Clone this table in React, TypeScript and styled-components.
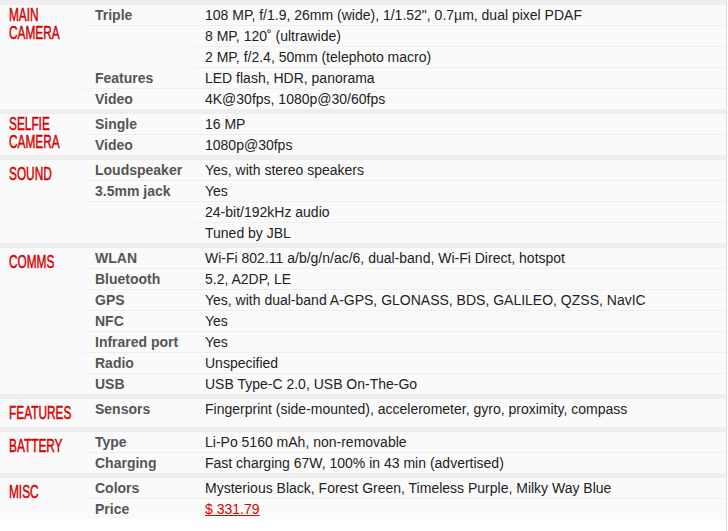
import React from "react";
import styled, { createGlobalStyle } from "styled-components";

const GlobalStyle = createGlobalStyle`
  html, body { margin: 0; padding: 0; background: #ffffff; }
  body { font-family: "Liberation Sans", Arial, sans-serif; }
`;

type Row = { label: string; value: string; price?: boolean };
type Section = { title: string[]; rows: Row[] };

const data: Section[] = [
  {
    title: ["MAIN", "CAMERA"],
    rows: [
      { label: "Triple", value: "108 MP, f/1.9, 26mm (wide), 1/1.52\", 0.7µm, dual pixel PDAF" },
      { label: "", value: "8 MP, 120˚ (ultrawide)" },
      { label: "", value: "2 MP, f/2.4, 50mm (telephoto macro)" },
      { label: "Features", value: "LED flash, HDR, panorama" },
      { label: "Video", value: "4K@30fps, 1080p@30/60fps" },
    ],
  },
  {
    title: ["SELFIE", "CAMERA"],
    rows: [
      { label: "Single", value: "16 MP" },
      { label: "Video", value: "1080p@30fps" },
    ],
  },
  {
    title: ["SOUND"],
    rows: [
      { label: "Loudspeaker", value: "Yes, with stereo speakers" },
      { label: "3.5mm jack", value: "Yes" },
      { label: "", value: "24-bit/192kHz audio" },
      { label: "", value: "Tuned by JBL" },
    ],
  },
  {
    title: ["COMMS"],
    rows: [
      { label: "WLAN", value: "Wi-Fi 802.11 a/b/g/n/ac/6, dual-band, Wi-Fi Direct, hotspot" },
      { label: "Bluetooth", value: "5.2, A2DP, LE" },
      { label: "GPS", value: "Yes, with dual-band A-GPS, GLONASS, BDS, GALILEO, QZSS, NavIC" },
      { label: "NFC", value: "Yes" },
      { label: "Infrared port", value: "Yes" },
      { label: "Radio", value: "Unspecified" },
      { label: "USB", value: "USB Type-C 2.0, USB On-The-Go" },
    ],
  },
  {
    title: ["FEATURES"],
    rows: [
      { label: "Sensors", value: "Fingerprint (side-mounted), accelerometer, gyro, proximity, compass" },
    ],
  },
  {
    title: ["BATTERY"],
    rows: [
      { label: "Type", value: "Li-Po 5160 mAh, non-removable" },
      { label: "Charging", value: "Fast charging 67W, 100% in 43 min (advertised)" },
    ],
  },
  {
    title: ["MISC"],
    rows: [
      { label: "Colors", value: "Mysterious Black, Forest Green, Timeless Purple, Milky Way Blue" },
      { label: "Price", value: "$ 331.79", price: true },
    ],
  },
];

const Page = styled.div`
  width: 726px;
  min-height: 531px;
  border-right: 1px solid #dcdcdc;
  background: #ffffff;
`;

const SpecList = styled.div`
  display: flex;
  flex-direction: column;
  gap: 5px;
  padding-top: 5px;
  background: #eeeeee;
`;

const SectionBox = styled.section`
  display: flex;
  align-items: flex-start;
  background: #fafafa;
`;

const Category = styled.div<{ $twoLine: boolean }>`
  flex: none;
  width: 84px;
  box-sizing: border-box;
  padding: ${(p) => (p.$twoLine ? "1px 0 3px 9px" : "5px 0 5px 9px")};
  font-family: "Liberation Sans", Arial, sans-serif;
  font-size: 16px;
  line-height: 18px;
  color: #d50000;
  -webkit-text-stroke: 0.45px #d50000;
`;

const CategoryLine = styled.span`
  display: block;
  width: 120px;
  height: 18px;
  transform: scale(0.74, 1.12);
  transform-origin: left center;
  white-space: nowrap;
`;

const Rows = styled.div`
  flex: 1;
  display: flex;
  flex-direction: column;
`;

const RowBox = styled.div`
  display: flex;
  font-size: 14px;
  line-height: 16px;
`;

const Label = styled.div<{ $border: boolean; $last: boolean }>`
  flex: none;
  width: 111px;
  box-sizing: border-box;
  padding: 2px 0 2px 11px;
  font-weight: bold;
  color: #555555;
  border-bottom: ${(p) =>
    p.$last ? "none" : `1px solid ${p.$border ? "#efefef" : "transparent"}`};
`;

const Value = styled.div<{ $last: boolean }>`
  flex: 1;
  padding: 2px 10px;
  color: #222222;
  border-bottom: ${(p) => (p.$last ? "none" : "1px solid #efefef")};
`;

const PriceLink = styled.a`
  color: #d50000;
  text-decoration: underline;
`;

export default function App() {
  return (
    <>
      <GlobalStyle />
      <Page>
        <SpecList>
          {data.map((s) => (
            <SectionBox key={s.title.join(" ")}>
              <Category $twoLine={s.title.length > 1}>
                {s.title.map((t) => (
                  <CategoryLine key={t}>{t}</CategoryLine>
                ))}
              </Category>
              <Rows>
                {s.rows.map((r, i) => {
                  const last = i === s.rows.length - 1;
                  return (
                    <RowBox key={i}>
                      <Label $border={r.label !== ""} $last={last}>
                        {r.label}
                      </Label>
                      <Value $last={last}>
                        {r.price ? <PriceLink href="#">{r.value}</PriceLink> : r.value}
                      </Value>
                    </RowBox>
                  );
                })}
              </Rows>
            </SectionBox>
          ))}
        </SpecList>
      </Page>
    </>
  );
}
